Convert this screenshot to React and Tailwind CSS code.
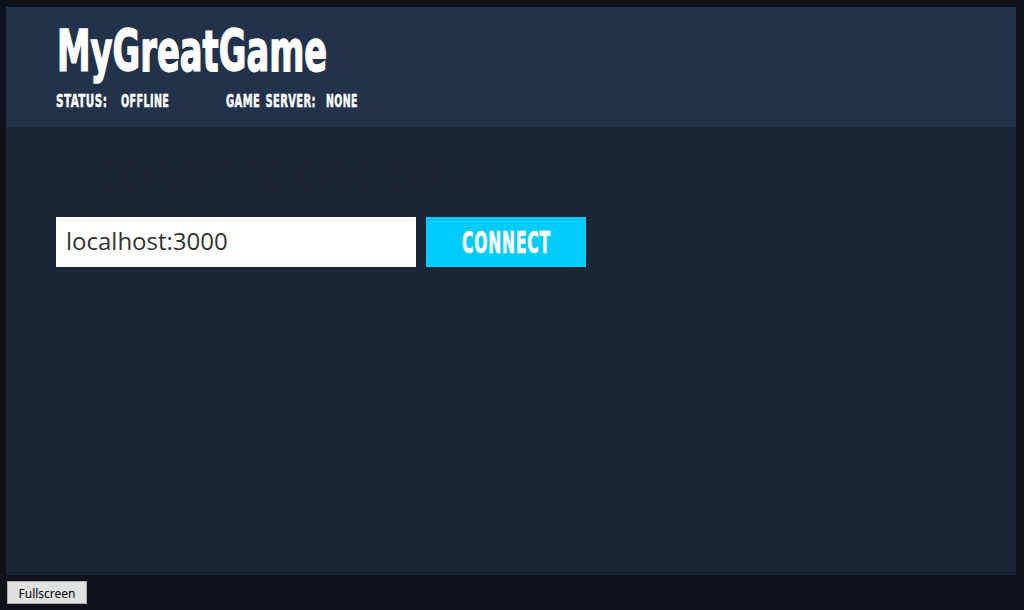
import { useLayoutEffect, useRef, useState } from "react";

// Condenses a line of display text to the width of its box.
function Condensed({ as: Tag = "span", className = "", children }) {
  const box = useRef(null);
  const text = useRef(null);
  const [scale, setScale] = useState(1);
  useLayoutEffect(() => {
    setScale(box.current.clientWidth / text.current.offsetWidth);
  }, [children]);
  return (
    <Tag ref={box} className={`block shrink-0 whitespace-nowrap font-['DejaVu_Sans',sans-serif] font-bold ${className}`}>
      <span ref={text} className="inline-block origin-left" style={{ transform: `scaleX(${scale})` }}>
        {children}
      </span>
    </Tag>
  );
}

export default function App() {
  return (
    <div className="flex h-[610px] w-[1024px] flex-col overflow-hidden bg-[#0f1219] pl-1.5 pt-[7px]">
      <main className="flex h-[568px] w-[1010px] flex-col bg-[#1b2635]">
        <header className="h-[120px] bg-[#22324b] pl-[50px] pt-4 text-white">
          <Condensed as="h1" className="ml-px h-[68px] w-[270px] text-[57px] leading-[56px] [-webkit-text-stroke:1.5px_white]">
            MyGreatGame
          </Condensed>
          <div className="flex text-[18px] leading-[20px] tracking-[0.04em] [-webkit-text-stroke:0.6px_white]">
            <Condensed className="w-[51px]">STATUS:</Condensed>
            <Condensed className="ml-3.5 w-12">OFFLINE</Condensed>
            <Condensed className="ml-[57px] w-[90px] [word-spacing:0.15em]">GAME SERVER:</Condensed>
            <Condensed className="ml-[10px] w-8">NONE</Condensed>
          </div>
        </header>
        <section className="flex flex-col pl-[50px] pt-[25px]">
          <Condensed as="h2" className="ml-[45px] h-[65px] w-[398px] text-[42px] leading-[50px] tracking-[0.1em] text-[#1c2434] [word-spacing:0.15em]">
            CONNECT TO GAME SERVER
          </Condensed>
          <form className="flex gap-2.5" onSubmit={(e) => e.preventDefault()}>
            <input
              aria-label="Server address"
              defaultValue="localhost:3000"
              className="h-[50px] w-[360px] bg-white px-2.5 pb-1 font-['Open_Sans',sans-serif] text-[24px] text-[#333333] outline-none"
            />
            <button className="flex h-[50px] w-40 justify-center bg-[#00ccff] text-[31px] leading-[50px] tracking-[0.05em] text-white [-webkit-text-stroke:0.7px_white]">
              <Condensed className="w-[89px] text-left">CONNECT</Condensed>
            </button>
          </form>
        </section>
      </main>
      <button className="ml-px mt-1.5 h-[23px] w-20 border border-[#adadad] bg-[#e1e1e1] pt-0.5 font-['Noto_Sans',sans-serif] text-[12px] leading-none text-black">
        Fullscreen
      </button>
    </div>
  );
}
